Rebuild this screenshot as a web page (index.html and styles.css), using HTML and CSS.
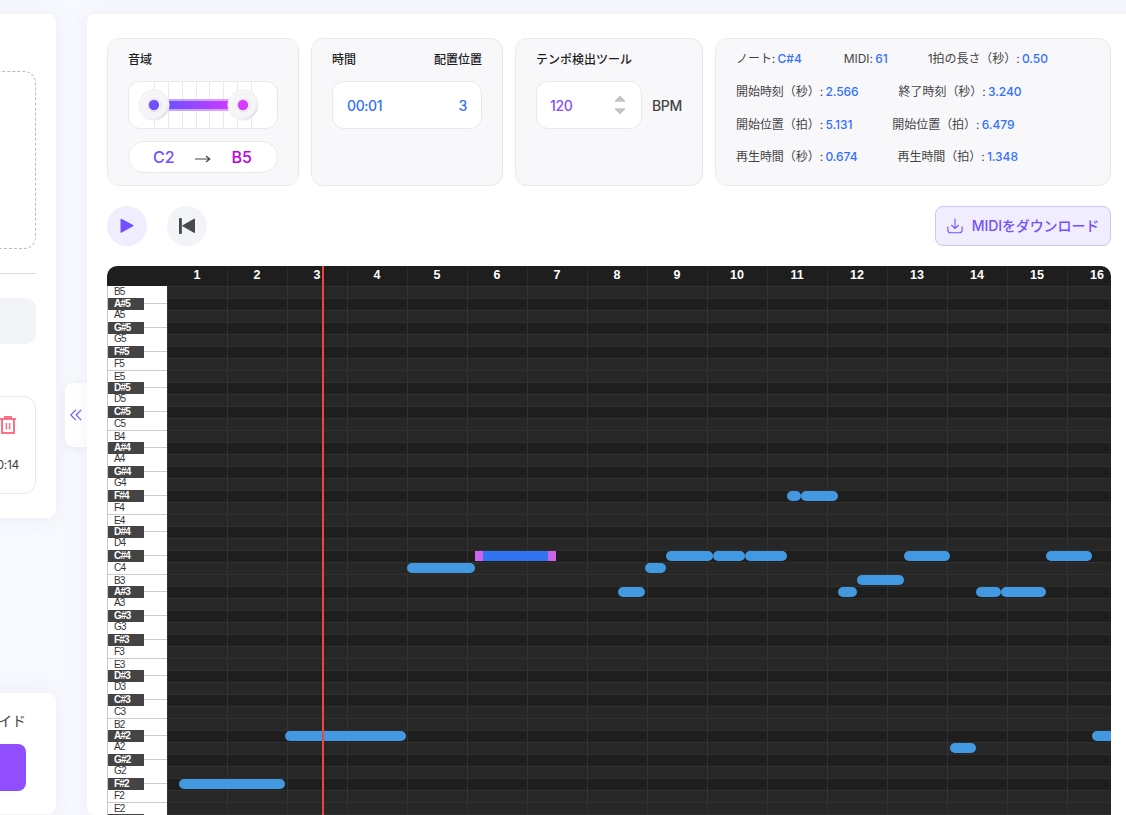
FILE: index.html
```html
<!DOCTYPE html>
<html lang="ja">
<head>
    <meta charset="UTF-8">
    <meta name="viewport" content="width=device-width, initial-scale=1.0">
    <title>MIDIエディター</title>
    <link rel="stylesheet" href="styles.css">
</head>
<body>
    <aside class="sidebar">
        <section class="side-card upload-card">
            <div class="drop-area"></div>
            <hr class="divider">
            <div class="side-select"></div>
            <div class="file-item">
                <svg class="trash" width="17" height="18" viewBox="0 0 17 18" fill="none" stroke="#fb7186" stroke-width="2">
                    <path d="M0 3h16M5 2.2V1h6v1.2M2 4v13h12V4"/>
                    <path d="M6.4 7v6.5M9.6 7v6.5" stroke-width="1.5"/>
                </svg>
                <span class="file-time">00:14</span>
            </div>
        </section>
        <section class="side-card guide-card">
            <span class="guide-text">ガイド</span>
            <div class="guide-button"></div>
        </section>
    </aside>

    <button class="collapse">
        <svg width="12" height="12" viewBox="0 0 12 12" fill="none" stroke="#7350ff" stroke-width="1.1">
            <path d="M5.8.8L.8 6l5 5.2M11.2.8L6.2 6l5 5.2"/>
        </svg>
    </button>

    <main class="editor">
        <div class="panels">
            <section class="panel">
                <div class="panel-title"><span>音域</span></div>
                <div class="box">
                    <svg width="148" height="46" viewBox="0 0 148 46">
                        <defs>
                            <linearGradient id="track" gradientUnits="userSpaceOnUse" x1="40" y1="0" x2="100" y2="0">
                                <stop offset="0" stop-color="#7350ff"/>
                                <stop offset="1" stop-color="#c83bff"/>
                            </linearGradient>
                            <linearGradient id="knob" x1="0" y1="0" x2="1" y2="1">
                                <stop offset="0" stop-color="#fafafc"/>
                                <stop offset="0.7" stop-color="#f3f3f7"/>
                                <stop offset="0.86" stop-color="#dedee2"/>
                                <stop offset="1" stop-color="#c2c2c8"/>
                            </linearGradient>
                        </defs>
                        <path d="M25.5 0v46M39.5 0v46M53.5 0v46M67.5 0v46M80.5 0v46M94.5 0v46M108.5 0v46M122.5 0v46" stroke="#e9e9ed"/>
                        <rect x="25" y="17" width="88" height="12" fill="#fff"/>
                        <rect x="25" y="17" width="88" height="12" fill="url(#track)" opacity=".5"/>
                        <rect x="25" y="19" width="88" height="8" fill="url(#track)"/>
                        <g stroke="#ececf0" stroke-width=".8">
                            <circle cx="25" cy="23" r="15.2" fill="url(#knob)"/>
                            <circle cx="114" cy="23" r="15.2" fill="url(#knob)"/>
                        </g>
                        <g fill="#f5f5f8">
                            <circle cx="25" cy="23" r="12.6"/>
                            <circle cx="114" cy="23" r="12.6"/>
                        </g>
                        <g fill="#fff" stroke="#d6d6db" stroke-width=".8">
                            <circle cx="25.5" cy="23.2" r="6.4"/>
                            <circle cx="114.5" cy="23.2" r="6.4"/>
                        </g>
                        <circle cx="25" cy="23" r="5.2" fill="#7350ff"/>
                        <circle cx="114" cy="23" r="5.2" fill="#d63cff"/>
                    </svg>
                </div>
                <div class="range">
                    <span class="low">C2</span>
                    <svg class="arrow" width="16" height="8" viewBox="0 0 16 8" fill="none" stroke="#444" stroke-width="1.2"><path d="M0 4h14.6M11 1L14.8 4 11 7"/></svg>
                    <span class="high">B5</span>
                </div>
            </section>

            <section class="panel">
                <div class="panel-title"><span>時間</span><span>配置位置</span></div>
                <div class="box time"><span>00:01</span><span>3</span></div>
            </section>

            <section class="panel tempo">
                <div class="panel-title"><span>テンポ検出ツール</span></div>
                <div class="tempo-row">
                    <div class="box bpm">
                        <span>120</span>
                        <svg width="12" height="20" viewBox="0 0 12 20" fill="#c4c4ca" stroke="#c4c4ca" stroke-linejoin="round"><path d="M1 6.2L6 .9l5 5.3zM1 13.8l5 5.3 5-5.3z"/></svg>
                    </div>
                    <span class="unit">BPM</span>
                </div>
            </section>

            <section class="panel info">
                <div class="info-row"><span>ノート: <b>C#4</b></span><span class="midi">MIDI: <b>61</b></span><span>1拍の長さ（秒）: <b>0.50</b></span></div>
                <div class="info-row"><span>開始時刻（秒）: <b>2.566</b></span><span>終了時刻（秒）: <b>3.240</b></span></div>
                <div class="info-row"><span>開始位置（拍）: <b>5.131</b></span><span>開始位置（拍）: <b>6.479</b></span></div>
                <div class="info-row"><span>再生時間（秒）: <b>0.674</b></span><span>再生時間（拍）: <b>1.348</b></span></div>
            </section>
        </div>

        <div class="toolbar">
            <button class="round play">
                <svg width="14" height="16" viewBox="0 0 14 16" fill="#7350ff" stroke="#7350ff" stroke-linejoin="round"><path d="M1 1.1v13.3L13.3 7.6z"/></svg>
            </button>
            <button class="round">
                <svg width="16" height="16" viewBox="0 0 16 16" fill="#464a4f" stroke="#464a4f" stroke-linejoin="round"><path d="M.5.5h1.8v15H.5zM15.5 1v13.6L3.6 7.8z"/></svg>
            </button>
            <button class="download">
                <svg width="16" height="16" viewBox="0 0 16 16" fill="none" stroke="#7350ff" stroke-width="1.1"><path d="M8 .5v10M4.3 7L8 10.6 11.7 7M.9 8.5v3.4q0 2.8 2.8 2.8h8.6q2.8 0 2.8-2.8V8.5"/></svg>
                <span>MIDIをダウンロード</span>
            </button>
        </div>

        <div class="roll">
            <div class="ruler"></div>
            <div class="rows">
                <div class="keys"></div>
                <div class="grid"></div>
            </div>
            <div class="playhead"></div>
        </div>
    </main>
    <script src="script.js"></script>
</body>
</html>
```
FILE: styles.css
```css
* {
    box-sizing: border-box;
}

body {
    margin: 0;
    height: 815px;
    display: flex;
    overflow: hidden;
    background: #f8f9fe;
    font-family: Inter, "Noto Sans CJK JP", sans-serif;
    font-size: 12px;
    color: #444;
}

button {
    border: 0;
    padding: 0;
    font-family: inherit;
    display: flex;
    align-items: center;
    justify-content: center;
}

svg {
    display: block;
    flex: none;
}

/* sidebar */
.sidebar {
    width: 56px;
    flex: none;
    padding-top: 14px;
    display: flex;
    flex-direction: column;
}

.side-card {
    width: 356px;
    margin-left: -300px;
    padding: 0 20px;
    background: #fff;
    border-radius: 8px;
    box-shadow: 0 0 20px rgba(80, 90, 160, 0.07);
}

.upload-card {
    height: 504px;
    padding-top: 57px;
}

.drop-area {
    height: 178px;
    border: 1px dashed #bbb;
    border-radius: 12px;
}

.divider {
    margin: 24px 0;
    border: 0;
    border-top: 1px solid #dcdcdf;
}

.side-select {
    height: 46px;
    border-radius: 10px;
    background: #f3f4f8;
}

.file-item {
    height: 98px;
    margin-top: 52px;
    padding: 19px 16px 0 0;
    border: 1px solid #e9e9ed;
    border-radius: 12px;
    display: flex;
    flex-direction: column;
    align-items: flex-end;
    gap: 22px;
}

.trash {
    margin-right: 2px;
}

.file-time {
    line-height: 18px;
    letter-spacing: -0.3px;
}

.guide-card {
    height: 121px;
    margin-top: 175px;
    padding: 18px 30px 0;
    text-align: right;
}

.guide-text {
    display: block;
    font-size: 14px;
    line-height: 20px;
}

.guide-button {
    height: 47px;
    margin-top: 13px;
    border-radius: 8px;
    background: #904eff;
}

.collapse {
    width: 22px;
    height: 64px;
    margin: 383px 0 0 9px;
    flex: none;
    border-radius: 8px 0 0 8px;
    background: #fff;
    box-shadow: 0 2px 8px rgba(80, 90, 160, 0.09);
}

/* editor */
.editor {
    position: relative;
    width: 1064px;
    height: 801px;
    margin-top: 14px;
    padding: 24px 40px 0 20px;
    flex: none;
    overflow: hidden;
    background: #fff;
    border-radius: 8px;
    box-shadow: 0 0 20px rgba(80, 90, 160, 0.07);
}

.panels {
    width: 1004px;
    display: grid;
    grid-template-columns: 192px 192px 188px 396px;
    gap: 12px;
}

.panel {
    height: 148px;
    padding: 12px 20px;
    background: #f8f8fb;
    border: 1px solid #e9e9ed;
    border-radius: 12px;
}

.panel-title {
    display: flex;
    justify-content: space-between;
    margin-bottom: 12px;
    line-height: 18px;
    font-weight: 500;
    color: #1e1e1e;
}

.box {
    height: 48px;
    background: #fff;
    border: 1px solid #e9e9ed;
    border-radius: 12px;
    font-size: 14px;
    font-weight: 500;
}

.range {
    height: 32px;
    margin-top: 12px;
    padding: 0 25px 0 24px;
    display: flex;
    align-items: center;
    justify-content: space-between;
    background: #fff;
    border: 1px solid #e9e9ed;
    border-radius: 16px;
    font-size: 16px;
    font-weight: 500;
}

.arrow {
    margin-top: 3px;
}

.low {
    color: #7350ff;
}

.high {
    color: #bf00e6;
}

.time {
    padding: 0 14px;
    display: flex;
    align-items: center;
    justify-content: space-between;
    letter-spacing: -0.4px;
    color: #3370ff;
}

.tempo-row {
    display: flex;
    align-items: center;
    gap: 10px;
}

.bpm {
    width: 106px;
    padding: 0 15px 0 13px;
    display: flex;
    align-items: center;
    justify-content: space-between;
    letter-spacing: -0.4px;
    color: #8050ff;
}

.unit {
    font-size: 14px;
    font-weight: 500;
    letter-spacing: -0.3px;
}

.info {
    padding-top: 11px;
    display: flex;
    flex-direction: column;
    gap: 14.8px;
}

.info-row {
    display: flex;
    gap: 40px;
    line-height: 18px;
    white-space: nowrap;
    word-spacing: -1px;
    letter-spacing: -0.05px;
}

.info-row b {
    font-weight: 500;
    color: #3370ff;
}

.midi {
    margin-left: 2px;
}

/* toolbar */
.toolbar {
    width: 1004px;
    margin: 20px 0;
    display: flex;
    gap: 20px;
}

.round {
    width: 40px;
    height: 40px;
    border-radius: 50%;
    background: #f3f4f8;
}

.play {
    background: #f0edff;
}

.download {
    width: 176px;
    height: 40px;
    margin-left: auto;
    gap: 9px;
    border: 1px solid #cfc5ff;
    border-radius: 8px;
    background: #f0edff;
    color: #7350ff;
    font-size: 14px;
    font-weight: 500;
    white-space: nowrap;
}

.download span {
    margin-bottom: 2px;
    letter-spacing: -0.1px;
}

/* piano roll */
.roll {
    position: relative;
    width: 1004px;
    height: 549px;
    overflow: hidden;
    border-radius: 10px 10px 0 0;
    background: #1e1e1e;
    font-family: "Liberation Sans", Arial, sans-serif;
}

.ruler {
    height: 20px;
    padding-left: 60px;
    display: flex;
}

.ruler span {
    width: 60px;
    flex: none;
    background: linear-gradient(#2a2a2a, #2a2a2a) left / 1px 100% no-repeat;
    line-height: 18px;
    text-align: center;
    font-size: 12.5px;
    font-weight: bold;
    color: #fff;
}

.ruler span:first-child {
    background: none;
}

.rows {
    display: flex;
}

.keys {
    width: 60px;
    border-left: 1px solid #c8c8cc;
    background: #fff;
}

.key {
    height: 12px;
    padding-left: 6px;
    font-size: 10px;
    letter-spacing: -0.8px;
    line-height: 12px;
    color: #333;
}

.key.up {
    line-height: 10px;
}

.key.edge {
    border-top: 1px solid #ccc;
    line-height: 11px;
}

.key.black {
    padding: 0;
    background: linear-gradient(transparent 5px, #ccc 5px, #ccc 6px, transparent 6px);
}

.key.black span {
    display: block;
    width: 36px;
    height: 12px;
    padding-left: 6px;
    background: #444;
    color: #fff;
    font-weight: bold;
}

.grid {
    position: relative;
    flex: 1;
}

.lane {
    height: 12px;
    border-top: 1px solid #303030;
    background: #272727;
}

.lane.black {
    background: #1e1e1e;
}

/* beat lines, one every 60px */
.lines {
    position: absolute;
    inset: 0;
    background: linear-gradient(90deg, #323232 1px, transparent 1px) 0 0 / 60px 100%;
}

.note {
    position: absolute;
    height: 10px;
    border-radius: 5px;
    background: #4299e1;
}

.note.selected {
    border: 0 solid #cd64ee;
    border-width: 0 8px;
    border-radius: 0;
    background: #3174f1;
}

.playhead {
    position: absolute;
    top: 0;
    bottom: 0;
    left: 215px;
    width: 2px;
    background: #f04440;
}
```
FILE: script.js
```js
const names = ["B", "A#", "A", "G#", "G", "F#", "F", "E", "D#", "D", "C#", "C"];
const rowHeight = 12;

// note, start x, end x
const notes = [
    ["F#2", 12.4, 118.4],
    ["A#2", 118.4, 239.5],
    ["C4", 239.7, 307.8],
    ["C#4", 308, 389],
    ["A#3", 451, 478],
    ["C4", 478, 499],
    ["C#4", 499, 546.4],
    ["C#4", 546.4, 578],
    ["C#4", 578, 620],
    ["F#4", 620, 634],
    ["F#4", 634, 671.4],
    ["A#3", 671.4, 689.6],
    ["B3", 690, 737],
    ["C#4", 737, 783],
    ["A2", 783, 809.4],
    ["A#3", 809.4, 834.4],
    ["A#3", 834.4, 879.3],
    ["C#4", 879.3, 925],
    ["A#2", 925, 960]
];

const ruler = document.querySelector(".ruler");
const keys = document.querySelector(".keys");
const grid = document.querySelector(".grid");
const rows = [];

for (let i = 1; i <= 16; i++) {
    const cell = document.createElement("span");
    cell.textContent = i;
    ruler.appendChild(cell);
}

for (let octave = 5; octave >= 2; octave--) {
    names.forEach(name => {
        const black = name.includes("#");
        const key = document.createElement("div");
        key.className = "key";
        if (black) key.classList.add("black");
        if (name === "A" || name === "G" || name === "D") key.classList.add("up");
        if (name === "E" || (name === "B" && octave < 5)) key.classList.add("edge");
        key.innerHTML = `<span>${name}${octave}</span>`;
        keys.appendChild(key);

        const lane = document.createElement("div");
        lane.className = black ? "lane black" : "lane";
        grid.appendChild(lane);
        rows.push(name + octave);
    });
}

const lines = document.createElement("div");
lines.className = "lines";
grid.appendChild(lines);

notes.forEach(([name, start, end], i) => {
    const note = document.createElement("div");
    note.className = i === 3 ? "note selected" : "note";
    note.style.left = start + "px";
    note.style.width = end - start + "px";
    note.style.top = rows.indexOf(name) * rowHeight + 1 + "px";
    grid.appendChild(note);
});
```
